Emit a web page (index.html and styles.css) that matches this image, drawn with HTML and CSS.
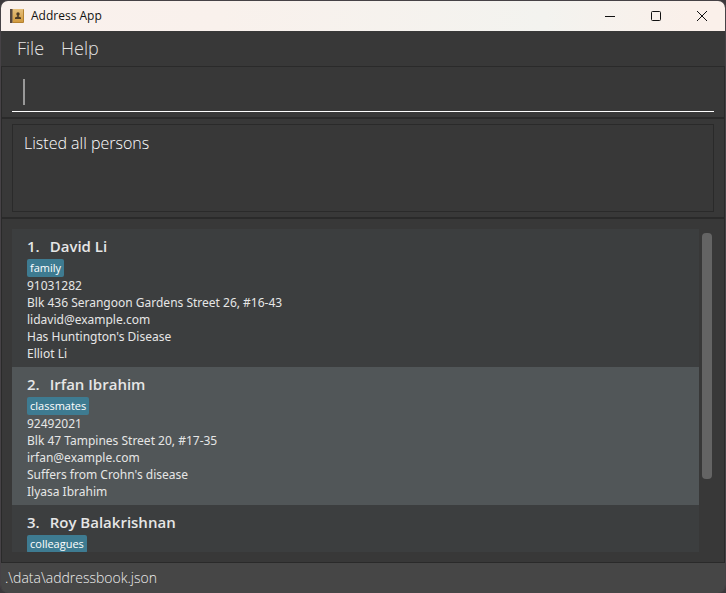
FILE: index.html
```html
<!DOCTYPE html>
<html lang="en">
<head>
<meta charset="utf-8">
<title>Address App</title>
<link rel="stylesheet" href="styles.css">
</head>
<body>
<div class="window">
  <header class="titlebar">
    <svg class="app-icon" width="14" height="14" viewBox="0 0 14 14" aria-hidden="true">
      <defs><linearGradient id="cover" x2="0" y2="1"><stop offset="0" stop-color="#e6c07c"/><stop offset="1" stop-color="#d19a3f"/></linearGradient></defs>
      <rect width="14" height="14" rx="1" fill="#b5822f"/>
      <rect x="3" width="10" height="13" fill="url(#cover)"/>
      <rect width="2" height="14" fill="#57483f"/>
      <rect x="2" width="1" height="14" fill="#9b7f58"/>
      <circle cx="8" cy="5" r="1.7" fill="#4d3b25"/>
      <path d="M7.3 6h1.4v1.4L11 8.500V10H5V8.500l2.300-1.100z" fill="#4d3b25"/>
    </svg>
    <h1 class="title">Address App</h1>
    <div class="controls">
      <button class="control" aria-label="Minimize"><svg width="12" height="12" viewBox="0 0 12 12"><path d="M1 6.500h10"/></svg></button>
      <button class="control" aria-label="Maximize"><svg width="12" height="12" viewBox="0 0 12 12"><rect x="1.500" y="1.500" width="9" height="9" rx="1"/></svg></button>
      <button class="control" aria-label="Close"><svg width="12" height="12" viewBox="0 0 12 12"><path d="M1 1l10 10M11 1L1 11"/></svg></button>
    </div>
  </header>
  <nav class="menubar">
    <button class="menu">File</button>
    <button class="menu">Help</button>
  </nav>
  <main class="content">
    <section class="command">
      <div class="command-field">
        <span class="caret"></span>
        <input class="command-input" type="text" aria-label="Command">
      </div>
    </section>
    <section class="result">
      <output class="result-box">Listed all persons</output>
    </section>
    <section class="list-pane">
      <ol class="persons">
        <li class="person">
          <h2 class="name"><span>1.</span><span>David Li</span></h2>
          <span class="tag">family</span>
          <p>91031282</p>
          <p>Blk 436 Serangoon Gardens Street 26, #16-43</p>
          <p>lidavid@example.com</p>
          <p>Has Huntington's Disease</p>
          <p>Elliot Li</p>
        </li>
        <li class="person">
          <h2 class="name"><span>2.</span><span>Irfan Ibrahim</span></h2>
          <span class="tag">classmates</span>
          <p>92492021</p>
          <p>Blk 47 Tampines Street 20, #17-35</p>
          <p>irfan@example.com</p>
          <p>Suffers from Crohn's disease</p>
          <p>Ilyasa Ibrahim</p>
        </li>
        <li class="person">
          <h2 class="name"><span>3.</span><span>Roy Balakrishnan</span></h2>
          <span class="tag">colleagues</span>
        </li>
      </ol>
      <div class="scrollbar"><div class="thumb"></div></div>
    </section>
  </main>
  <footer class="statusbar">.\data\addressbook.json</footer>
</div>
</body>
</html>
```
FILE: styles.css
```css
* {
  box-sizing: border-box;
}

body {
  margin: 0;
  background: #3b383b;
  font-family: "Open Sans", "Noto Sans", sans-serif;
}

h1, h2, p, ol {
  margin: 0;
  padding: 0;
  font-weight: 400;
}

button {
  border: 0;
  padding: 0;
  background: none;
  font-family: inherit;
}

.window {
  display: flex;
  flex-direction: column;
  height: 100vh;
  border: 1px solid #464246;
  border-bottom: 0;
  border-radius: 8px;
  overflow: hidden;
  background: #383838;
}

.titlebar {
  display: flex;
  flex: none;
  align-items: center;
  height: 30px;
  padding-left: 9px;
  background: linear-gradient(90deg, #faf1ed, #f9f1ec 30%, #f3f3ef 75%, #faf0ea 95%);
}

.title {
  margin-left: 7px;
  font-size: 12px;
  line-height: 16px;
  color: #111;
}

.controls {
  display: flex;
  margin-left: auto;
}

.control {
  display: flex;
  align-items: center;
  justify-content: center;
  width: 46px;
  height: 28px;
}

.control svg {
  fill: none;
  stroke: #111;
}

.menubar {
  display: flex;
  flex: none;
  gap: 17px;
  height: 35px;
  padding: 0 16px 2px;
}

.menu {
  font-size: 18px;
  font-weight: 300;
  color: #e4e4e4;
}

.content {
  display: flex;
  flex: 1;
  flex-direction: column;
  min-height: 0;
  border: 1px solid #2a2a2a;
}

.command {
  padding: 0 10px 5px;
  border-bottom: 2px solid #2a2a2a;
}

.command-field {
  display: flex;
  align-items: center;
  height: 45px;
  padding: 6px 11px 0;
  border-bottom: 1px solid #fff;
}

.caret {
  width: 2px;
  height: 26px;
  background: #999;
}

.command-input {
  flex: 1;
  min-width: 0;
  border: 0;
  outline: 0;
  background: none;
  color: #fff;
  font: 300 18px "Open Sans", sans-serif;
}

.result {
  padding: 5px 10px;
  border-bottom: 2px solid #2a2a2a;
}

.result-box {
  display: block;
  height: 88px;
  padding: 6px 11px;
  border: 1px solid #2a2a2a;
  font-size: 16px;
  font-weight: 300;
  line-height: 24px;
  color: #fff;
}

.list-pane {
  display: flex;
  flex: 1;
  gap: 3px;
  min-height: 0;
  padding: 10px 12px 10px 10px;
}

.persons {
  flex: 1;
  overflow: hidden;
  list-style: none;
  background: #3c3e3f;
}

.person {
  padding: 5px 15px;
  font-family: "Noto Sans", "Open Sans", sans-serif;
  font-size: 12px;
  line-height: 17px;
  color: #e6e6e6;
}

.person:nth-child(even) {
  background: #515658;
}

.name {
  display: flex;
  gap: 10px;
  font-family: "Open Sans", "Noto Sans", sans-serif;
  font-size: 15px;
  font-weight: 600;
  line-height: 25px;
}

.tag {
  display: block;
  width: fit-content;
  padding: 0 3px;
  border-radius: 2px;
  background: #3e7b91;
  font-family: "Open Sans", "Noto Sans", sans-serif;
  font-size: 11px;
  line-height: 18px;
  color: #fff;
}

.scrollbar {
  width: 10px;
  padding: 4px 0;
}

.thumb {
  height: 78%;
  border-radius: 4px;
  background: #646464;
}

.statusbar {
  flex: none;
  height: 30px;
  padding-left: 4px;
  background: #464646;
  font-size: 14px;
  font-weight: 300;
  line-height: 30px;
  color: #eee;
}
```
